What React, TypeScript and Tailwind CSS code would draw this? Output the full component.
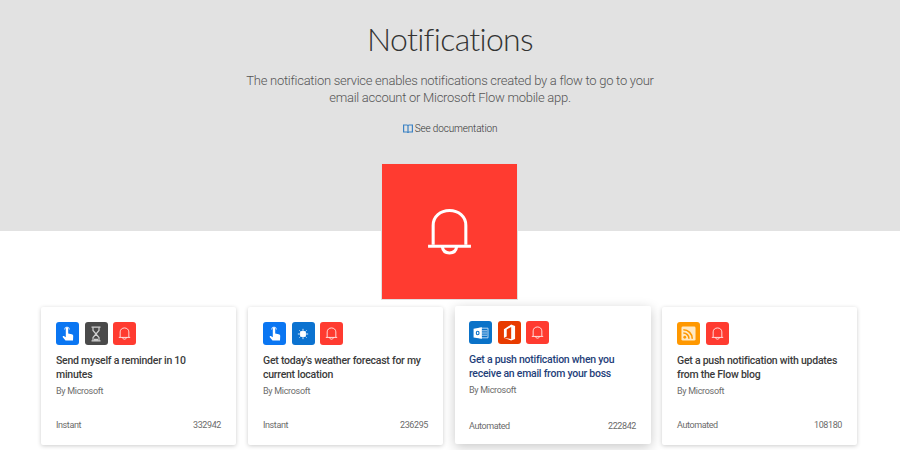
import React from 'react';

type IconKind = 'touch' | 'hourglass' | 'bell' | 'sun' | 'outlook' | 'office' | 'rss';

const tileColors: Record<IconKind, string> = {
  touch: 'bg-[#0a76f2]',
  hourglass: 'bg-[#4a4a4a]',
  bell: 'bg-[#ff3b30]',
  sun: 'bg-[#0b72d0]',
  outlook: 'bg-[#0a72c8]',
  office: 'bg-[#e83b00]',
  rss: 'bg-[#ff9800]',
};

const BellIcon = ({ size }: { size: number }) => (
  <svg width={size} height={size} viewBox="0 0 48 48" fill="none" stroke="white" strokeWidth="3">
    <path d="M8 37V18C8 9.500 15 3.500 24 3.500S40 9.500 40 18V37" />
    <path d="M3 38.500H45" />
    <path d="M17 39C17.500 43 20.500 45 24 45S30.500 43 31 39" />
  </svg>
);

const Glyph = ({ kind }: { kind: IconKind }) => {
  if (kind === 'bell') return <BellIcon size={13} />;
  if (kind === 'touch') {
    return (
      <svg width="14" height="16" viewBox="0 0 14 16" fill="white">
        <path d="M4.800 2.500a1.200 1.200 0 0 1 2.400 0V7.500l3.400.8c1.300.3 1.800 1.200 1.600 2.300L12 14.500H4.500L1.800 11.200c-.5-.7.300-1.500 1-1.100l2 1.100z" />
        <path d="M3.600 3.500a2.400 2.400 0 1 1 4.800 0" fill="none" stroke="white" strokeWidth="0.800" />
      </svg>
    );
  }
  if (kind === 'hourglass') {
    return (
      <svg width="12" height="16" viewBox="0 0 12 16" fill="none" stroke="#cfcfcf" strokeWidth="1.200">
        <path d="M1.500 1.200h9M1.500 14.800h9" />
        <path d="M3 1.200v3.300L6 8l3-3.500V1.200M3 14.800v-3.300L6 8l3 3.500v3.300" />
        <path d="M4 12.800h4v2H4z" fill="#cfcfcf" stroke="none" />
      </svg>
    );
  }
  if (kind === 'sun') {
    return (
      <svg width="12" height="12" viewBox="0 0 14 14" fill="white" stroke="white" strokeWidth="1">
        <circle cx="7" cy="7" r="3.400" />
        <path d="M7 1v2M7 11v2M1 7h2M11 7h2M2.800 2.800l1.400 1.400M9.800 9.800l1.400 1.400M2.800 11.200l1.400-1.400M9.800 4.200l1.400-1.400" />
      </svg>
    );
  }
  if (kind === 'outlook') {
    return (
      <svg width="16" height="14" viewBox="0 0 18 16">
        <path d="M7 2.500h10v11H7z" fill="none" stroke="#cfe4f7" strokeWidth="1" />
        <path d="M10 5.500h6M10 8h6M10 10.500h6" stroke="#cfe4f7" strokeWidth="1" />
        <path d="M0.500 3 10 1.500v13L0.500 13z" fill="white" />
        <ellipse cx="5.200" cy="8" rx="2.200" ry="2.600" fill="#0a72c8" />
        <ellipse cx="5.200" cy="8" rx="0.900" ry="1.400" fill="white" />
      </svg>
    );
  }
  if (kind === 'office') {
    return (
      <svg width="13" height="17" viewBox="0 0 14 18" fill="white">
        <path d="M8.800 0.500 13 2v14l-4.200 1.500L1 15V5.500zM8.800 3 4 5.800v7.400l-3 1.800 7.800 1V3z" fillRule="evenodd" />
      </svg>
    );
  }
  return (
    <svg width="15" height="15" viewBox="0 0 16 16">
      <rect x="0.500" y="0.500" width="15" height="15" rx="1.500" fill="#ffe9c4" />
      <circle cx="4" cy="12" r="1.500" fill="#ff9800" />
      <path d="M2.500 7.500a6 6 0 0 1 6 6M2.500 4a9.500 9.500 0 0 1 9.500 9.500" fill="none" stroke="#ff9800" strokeWidth="1.700" />
    </svg>
  );
};

const Tile = ({ kind }: { kind: IconKind }) => (
  <div className={`flex h-[23px] w-[23px] items-center justify-center overflow-hidden rounded-[3px] ${tileColors[kind]}`}>
    <Glyph kind={kind} />
  </div>
);

const cards: { icons: IconKind[]; title: string; type: string; count: string; active?: boolean }[] = [
  { icons: ['touch', 'hourglass', 'bell'], title: 'Send myself a reminder in 10 minutes', type: 'Instant', count: '332942' },
  { icons: ['touch', 'sun', 'bell'], title: "Get today's weather forecast for my current location", type: 'Instant', count: '236295' },
  { icons: ['outlook', 'office', 'bell'], title: 'Get a push notification when you receive an email from your boss', type: 'Automated', count: '222842', active: true },
  { icons: ['rss', 'bell'], title: 'Get a push notification with updates from the Flow blog', type: 'Automated', count: '108180' },
];

const Card = ({ card }: { card: (typeof cards)[number] }) => (
  <div
    className={`flex h-[138px] flex-col rounded-[2px] bg-white pt-[15px] pr-[15px] ${
      card.active
        ? 'relative -mt-[1px] -mr-[1px] w-[196px] pl-[14px] shadow-[0_3px_12px_rgba(0,0,0,0.22)]'
        : 'w-[195px] pl-[15px] shadow-[0_1px_4px_rgba(0,0,0,0.2)]'
    }`}
  >
    <div className="flex gap-[5.7px]">
      {card.icons.map((kind, i) => (
        <Tile key={i} kind={kind} />
      ))}
    </div>
    <div className={`mt-[9px] text-[10.5px] font-medium leading-[14px] tracking-[-0.25px] ${card.active ? 'text-[#1f3f7a]' : 'text-[#3b3b3b]'}`}>
      {card.title}
    </div>
    <div className="mt-[2px] text-[9px] leading-[14px] tracking-[-0.3px] text-[#6b6b6b]">By Microsoft</div>
    <div className={`mt-auto flex justify-between text-[9px] tracking-[-0.4px] text-[#6b6b6b] ${card.active ? 'pb-[11px]' : 'pb-[13px]'}`}>
      <span>{card.type}</span>
      <span>{card.count}</span>
    </div>
  </div>
);

export default function App() {
  return (
    <div className="h-[450px] w-[900px] overflow-hidden bg-white font-['Roboto',sans-serif]">
      <div className="flex h-[231px] flex-col items-center bg-[#e2e2e2] pt-[16px]">
        <h1 className="font-['Lato',sans-serif] text-[32px] font-light leading-[46px] tracking-[-0.7px] text-[#333333]">Notifications</h1>
        <p className="mt-[10px] w-[430px] text-center text-[13px] font-light leading-[17px] tracking-[-0.27px] text-[#555555]">
          The notification service enables notifications created by a flow to go to your email account or Microsoft Flow mobile app.
        </p>
        <div className="mt-[16px] flex items-center gap-[2px] text-[10px] font-light leading-[14px] tracking-[-0.15px] text-[#333333]">
          <svg width="10" height="10" viewBox="0 0 10 10" fill="none" stroke="#3b82c4" strokeWidth="1.200">
            <path d="M0.600 1h3.400c.6 0 1 .4 1 1v7c0-.6-.4-1-1-1H.6zM9.400 1H6c-.6 0-1 .4-1 1v7c0-.6.4-1 1-1h3.400z" />
          </svg>
          See documentation
        </div>
        <div className="mt-[28px] -ml-[1px] flex h-[135px] w-[135px] shrink-0 items-center justify-center bg-[#ff3b30] outline outline-1 outline-[#e0e0e0]">
          <BellIcon size={49} />
        </div>
      </div>
      <div className="mt-[76px] flex items-start gap-[12px] pl-[41px]">
        {cards.map((card) => (
          <Card key={card.title} card={card} />
        ))}
      </div>
    </div>
  );
}
